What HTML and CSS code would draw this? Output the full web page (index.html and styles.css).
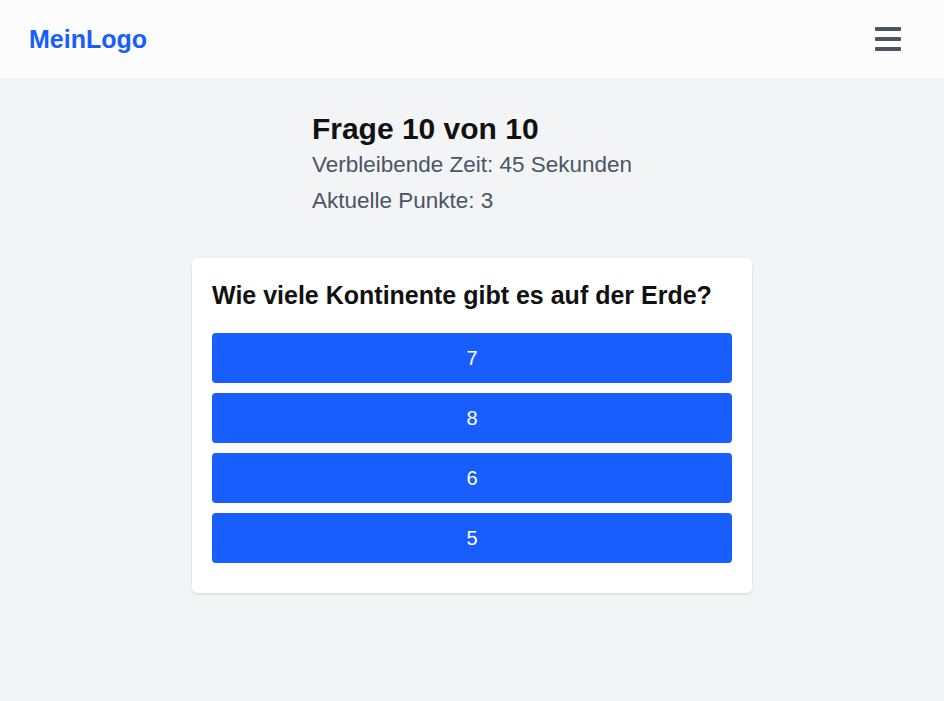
FILE: index.html
```html
<!DOCTYPE html>
<html lang="de">
<head>
<meta charset="utf-8">
<title>Quiz</title>
<link rel="stylesheet" href="styles.css">
</head>
<body>
<header class="topbar">
  <div class="logo">MeinLogo</div>
  <button class="menu" aria-label="Menü">
    <span class="bar"></span>
    <span class="bar"></span>
    <span class="bar"></span>
  </button>
</header>
<main class="main">
  <section class="status">
    <h1 class="status-title">Frage 10 von 10</h1>
    <p class="status-line">Verbleibende Zeit: 45 Sekunden</p>
    <p class="status-line">Aktuelle Punkte: 3</p>
  </section>
  <section class="card">
    <h2 class="question">Wie viele Kontinente gibt es auf der Erde?</h2>
    <div class="answers">
      <button class="answer">7</button>
      <button class="answer">8</button>
      <button class="answer">6</button>
      <button class="answer">5</button>
    </div>
  </section>
</main>
</body>
</html>
```

FILE: styles.css
```css
* { box-sizing: border-box; }
html, body {
  margin: 0;
  padding: 0;
}
body {
  background: #f3f4f6;
  font-family: "Liberation Sans", Arial, sans-serif;
  color: #111111;
  min-height: 701px;
}
.topbar {
  height: 78px;
  background: #fcfcfc;
  display: flex;
  align-items: center;
  justify-content: space-between;
  padding: 0 43px 0 29px;
}
.logo {
  color: #185eff;
  font-weight: bold;
  font-size: 25px;
}
.menu {
  border: 0;
  background: none;
  padding: 0;
  width: 26px;
  display: flex;
  flex-direction: column;
  gap: 6px;
  cursor: pointer;
}
.bar {
  display: block;
  width: 26px;
  height: 4px;
  border-radius: 1px;
  background: #4b5563;
}
.main {
  padding-top: 34px;
}
.status {
  width: fit-content;
  margin: 0 auto 39px;
}
.status-title {
  margin: 0 0 1px;
  font-size: 30px;
  font-weight: bold;
  color: #111111;
}
.status-line {
  margin: 0;
  font-size: 22.5px;
  line-height: 36px;
  color: #4b5563;
}
.card {
  width: 560px;
  margin: 0 auto;
  background: #ffffff;
  border-radius: 6px;
  box-shadow: 0 1px 3px rgba(0, 0, 0, 0.12);
  padding: 20px 20px 30px;
}
.question {
  margin: 0 0 21px;
  font-size: 25px;
  line-height: 34px;
  font-weight: bold;
  color: #111111;
}
.answers {
  display: flex;
  flex-direction: column;
  gap: 10px;
}
.answer {
  height: 50px;
  border: 0;
  border-radius: 4px;
  background: #185eff;
  color: #ffffff;
  font-family: "Liberation Sans", Arial, sans-serif;
  font-size: 20px;
  cursor: pointer;
}
```
